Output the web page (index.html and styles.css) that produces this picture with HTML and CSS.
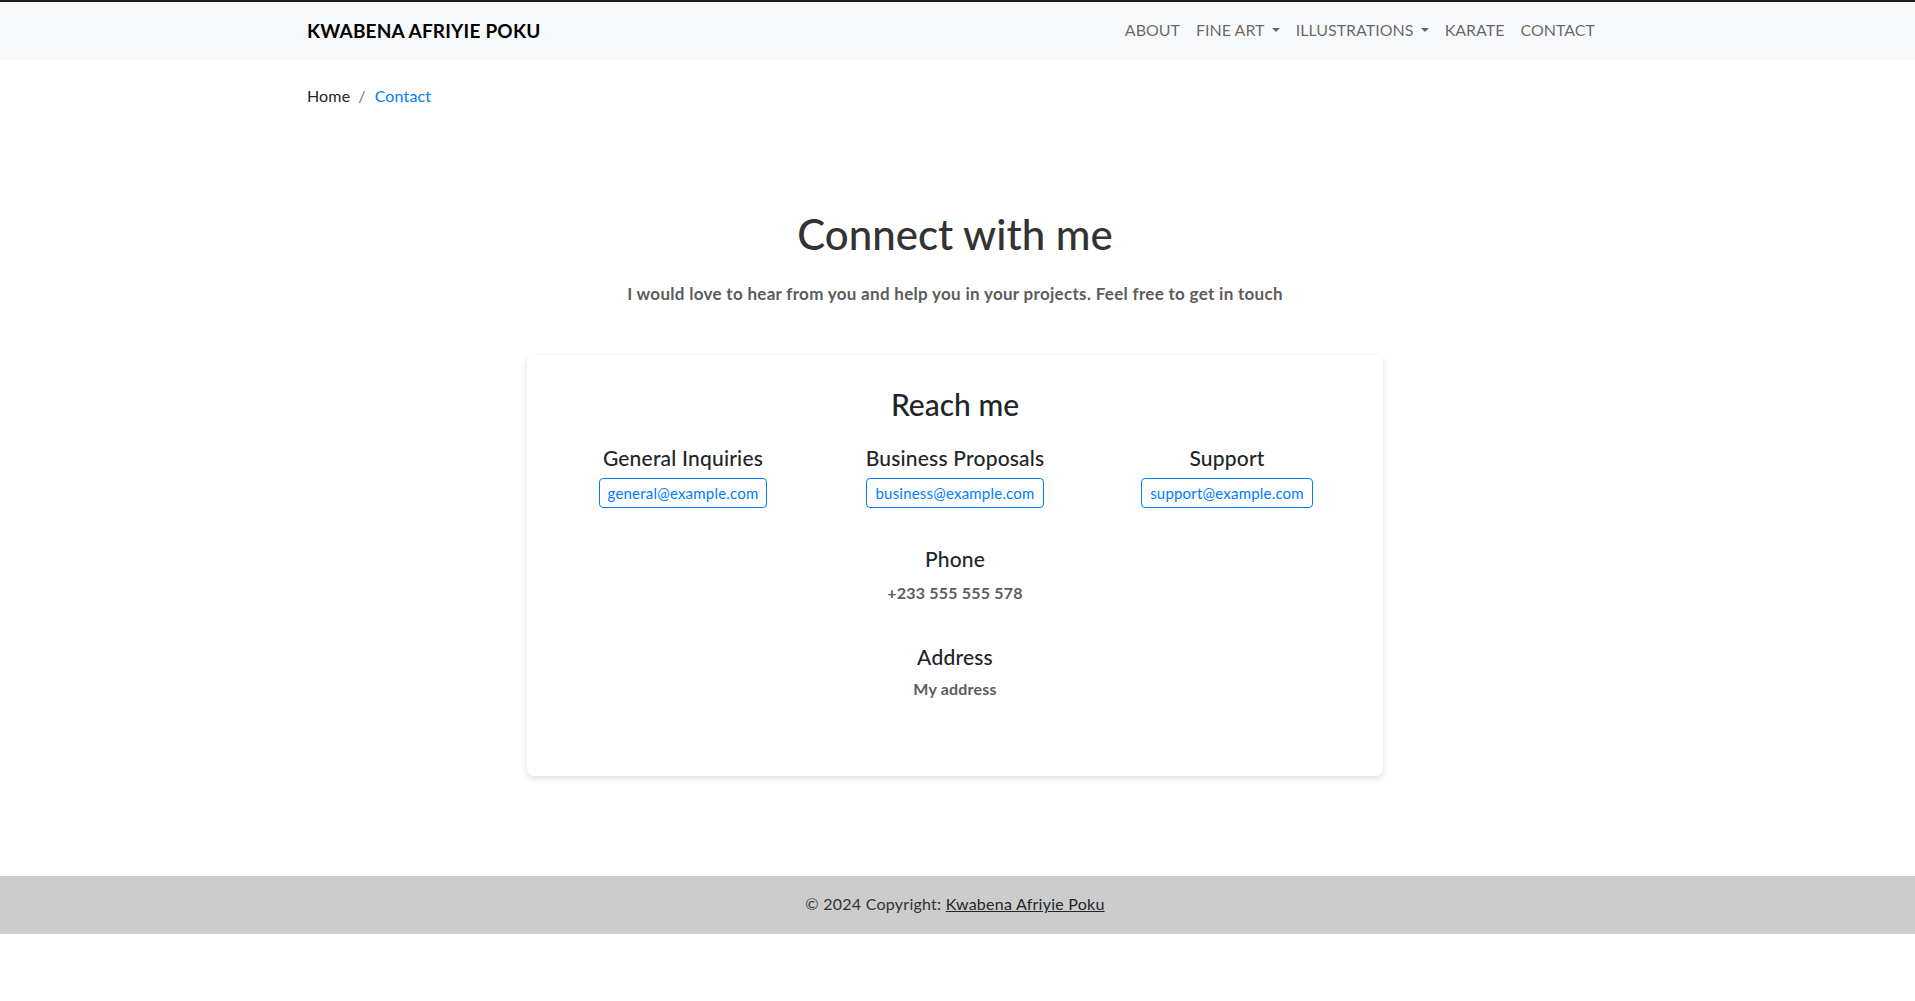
FILE: index.html
```html
<!DOCTYPE html>
<html lang="en">
<head>
<meta charset="utf-8">
<title>Contact - Kwabena Afriyie Poku</title>
<link rel="stylesheet" href="styles.css">
</head>
<body>
<header class="navbar">
  <div class="container nav-inner">
    <a class="brand" href="#">KWABENA AFRIYIE POKU</a>
    <ul class="nav-links">
      <li><a class="nav-link" href="#">ABOUT</a></li>
      <li><a class="nav-link dropdown" href="#">FINE ART</a></li>
      <li><a class="nav-link dropdown" href="#">ILLUSTRATIONS</a></li>
      <li><a class="nav-link" href="#">KARATE</a></li>
      <li><a class="nav-link" href="#">CONTACT</a></li>
    </ul>
  </div>
</header>

<main class="container">
  <ol class="breadcrumb">
    <li class="crumb"><a href="#">Home</a></li>
    <li class="crumb active">Contact</li>
  </ol>

  <section class="contact">
    <h1 class="title">Connect with me</h1>
    <p class="lead">I would love to hear from you and help you in your projects. Feel free to get in touch</p>

    <div class="card">
      <h3 class="card-title">Reach me</h3>
      <div class="emails">
        <div class="email-col">
          <h5 class="label">General Inquiries</h5>
          <a class="btn-email" href="#">general@example.com</a>
        </div>
        <div class="email-col">
          <h5 class="label">Business Proposals</h5>
          <a class="btn-email" href="#">business@example.com</a>
        </div>
        <div class="email-col">
          <h5 class="label">Support</h5>
          <a class="btn-email" href="#">support@example.com</a>
        </div>
      </div>
      <div class="info info-phone">
        <h5 class="label">Phone</h5>
        <p class="value">+233 555 555 578</p>
      </div>
      <div class="info info-address">
        <h5 class="label">Address</h5>
        <p class="value">My address</p>
      </div>
    </div>
  </section>
</main>

<footer class="footer">
  © 2024 Copyright: <a class="footer-link" href="#">Kwabena Afriyie Poku</a>
</footer>
</body>
</html>
```
FILE: styles.css
```css
* { box-sizing: border-box; }

html, body {
  margin: 0;
  padding: 0;
}

body {
  font-family: Lato, "Noto Sans", sans-serif;
  font-size: 16px;
  line-height: 24px;
  color: #212529;
  background: #ffffff;
}

a { text-decoration: none; }

.container {
  width: 1296px;
  margin-left: calc(50% - 650.5px);
  margin-right: auto;
}

/* ---------- Navbar ---------- */
.navbar {
  background: #f8f9fa;
  border-top: 2px solid #1c1c1c;
  height: 60px;
}

.nav-inner {
  height: 58px;
  display: flex;
  align-items: center;
  justify-content: space-between;
}

.brand {
  font-size: 19px;
  font-weight: 700;
  color: #000;
  letter-spacing: 0.2px;
}

.nav-links {
  list-style: none;
  margin: 0 0 2px;
  padding: 0;
  display: flex;
}

.nav-link {
  display: block;
  padding: 8px 8px;
  font-size: 16px;
  color: rgba(0, 0, 0, 0.6);
}

.dropdown::after {
  content: "";
  display: inline-block;
  margin-left: 0.45em;
  vertical-align: 0.255em;
  border-top: 0.3em solid;
  border-right: 0.3em solid transparent;
  border-left: 0.3em solid transparent;
}

/* ---------- Breadcrumb ---------- */
.breadcrumb {
  list-style: none;
  display: flex;
  margin: 24px 0 0;
  padding: 0;
  letter-spacing: 0.15px;
}

.crumb a { color: #212529; }

.crumb + .crumb::before {
  content: "/";
  color: #6c757d;
  padding: 0 9px 0 8px;
}

.crumb.active { color: #007bff; }

/* ---------- Contact ---------- */
.contact {
  text-align: center;
  padding-top: 101px;
}

.title {
  margin: 0;
  font-size: 42px;
  line-height: 1.2;
  font-weight: 500;
  color: #333;
}

.lead {
  margin: 23px 0 0;
  font-size: 17px;
  letter-spacing: 0.3px;
  font-weight: 700;
  color: #5c5c5c;
}

.card {
  width: 856px;
  margin: 49px auto 0;
  padding: 31px 20px 75px;
  background: #fff;
  border-radius: 7px;
  box-shadow: 0 3px 7px rgba(0, 0, 0, 0.12), 0 0 2px rgba(0, 0, 0, 0.04);
}

.card-title {
  margin: 0;
  font-size: 30px;
  line-height: 1.2;
  font-weight: 500;
  color: #212529;
}

.emails {
  display: grid;
  grid-template-columns: repeat(3, 1fr);
  margin-top: 24px;
}

.email-col {
  display: flex;
  flex-direction: column;
  align-items: center;
}

.label {
  margin: 0 0 8px;
  font-size: 21px;
  letter-spacing: 0.2px;
  line-height: 24px;
  font-weight: 500;
  color: #212529;
}

.btn-email {
  display: inline-block;
  padding: 2px 8px;
  font-size: 15px;
  letter-spacing: 0.2px;
  line-height: 24px;
  color: #007bff;
  border: 1px solid #007bff;
  border-radius: 4px;
}

.info-phone { margin-top: 39px; }
.info-phone .label { margin-bottom: 10px; }
.info-address { margin-top: 40px; }
.info-address .label { margin-bottom: 8px; }

.value {
  margin: 0;
  font-weight: 700;
  letter-spacing: 0.2px;
  color: #5c5c5c;
}

/* ---------- Footer ---------- */
.footer {
  margin-top: 100px;
  padding: 16px 5px 18px 0;
  background: rgba(0, 0, 0, 0.2);
  text-align: center;
  color: #333;
  letter-spacing: 0.25px;
}

.footer-link {
  color: #212529;
  text-decoration: underline;
}
```
